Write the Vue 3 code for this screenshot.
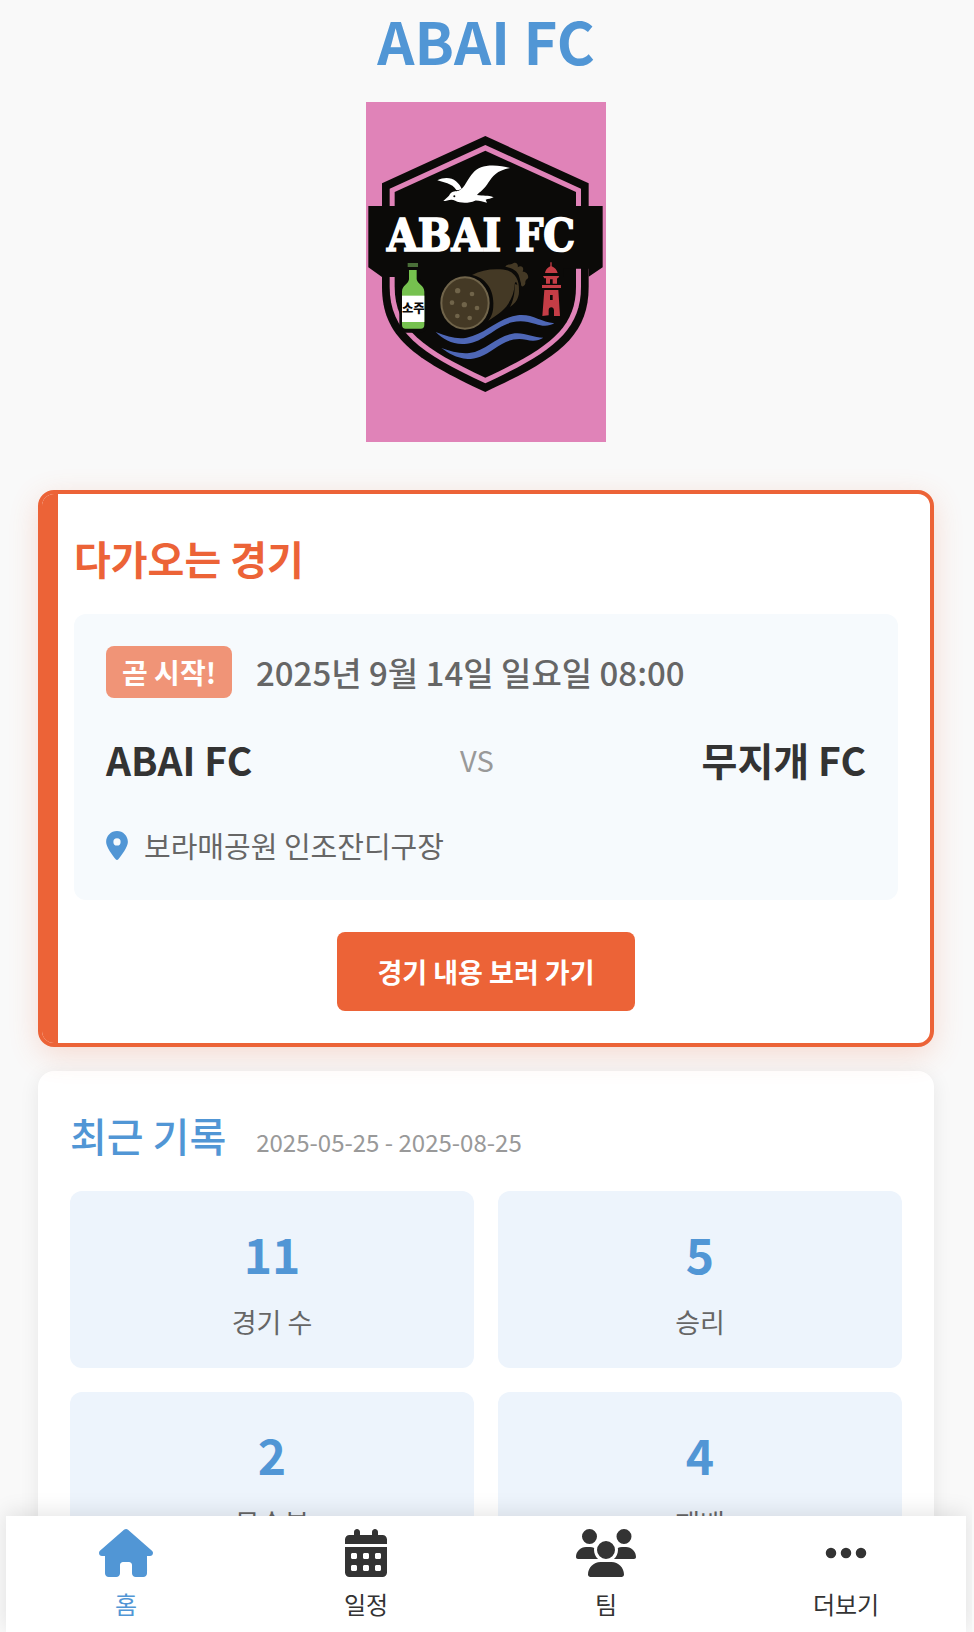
<script setup>
const stats = [
  { value: 11, label: '경기 수' },
  { value: 5, label: '승리' },
  { value: 2, label: '무승부' },
  { value: 4, label: '패배' }
]

const tabs = [
  {
    label: '홈',
    active: true,
    box: '0 0 576 512',
    width: 54,
    path: 'M575.8 255.5c0 18-15 32.1-32 32.1h-32l.7 160.2c0 2.7-.2 5.4-.5 8.1V472c0 22.1-17.9 40-40 40H456c-1.1 0-2.2 0-3.3-.1c-1.4 .1-2.8 .1-4.2 .1H416 392c-22.1 0-40-17.9-40-40V448 384c0-17.7-14.3-32-32-32H256c-17.7 0-32 14.3-32 32v64 24c0 22.1-17.9 40-40 40H160 128.1c-1.5 0-3-.1-4.5-.2c-1.2 .1-2.4 .2-3.6 .2H104c-22.1 0-40-17.9-40-40V360c0-.9 0-1.9 .1-2.8V287.6H32c-18 0-32-14-32-32.1c0-9 3-17 10-24L266.4 8c7-7 15-8 22-8s15 2 21 7L564.8 231.5c8 7 12 15 11 24z'
  },
  {
    label: '일정',
    box: '0 0 448 512',
    width: 42,
    path: 'M128 0c17.7 0 32 14.3 32 32V64H288V32c0-17.7 14.3-32 32-32s32 14.3 32 32V64h48c26.5 0 48 21.5 48 48v48H0V112C0 85.5 21.5 64 48 64H96V32c0-17.7 14.3-32 32-32zM0 192H448V464c0 26.5-21.5 48-48 48H48c-26.5 0-48-21.5-48-48V192zm64 80v32c0 8.8 7.2 16 16 16h32c8.8 0 16-7.2 16-16V272c0-8.8-7.2-16-16-16H80c-8.8 0-16 7.2-16 16zm128 0v32c0 8.8 7.2 16 16 16h32c8.8 0 16-7.2 16-16V272c0-8.8-7.2-16-16-16H208c-8.8 0-16 7.2-16 16zm144-16c-8.8 0-16 7.2-16 16v32c0 8.8 7.2 16 16 16h32c8.8 0 16-7.2 16-16V272c0-8.8-7.2-16-16-16H336zM64 400v32c0 8.8 7.2 16 16 16h32c8.8 0 16-7.2 16-16V400c0-8.8-7.2-16-16-16H80c-8.8 0-16 7.2-16 16zm144-16c-8.8 0-16 7.2-16 16v32c0 8.8 7.2 16 16 16h32c8.8 0 16-7.2 16-16V400c0-8.8-7.2-16-16-16H208zm112 16v32c0 8.8 7.2 16 16 16h32c8.8 0 16-7.2 16-16V400c0-8.8-7.2-16-16-16H336c-8.8 0-16 7.2-16 16z'
  },
  {
    label: '팀',
    box: '0 0 640 512',
    width: 60,
    path: 'M144 0a80 80 0 1 1 0 160A80 80 0 1 1 144 0zM512 0a80 80 0 1 1 0 160A80 80 0 1 1 512 0zM0 298.7C0 239.8 47.8 192 106.7 192h42.7c15.9 0 31 3.5 44.6 9.7c-1.3 7.2-1.9 14.7-1.9 22.3c0 38.2 16.8 72.5 43.3 96c-.2 0-.4 0-.7 0H21.3C9.6 320 0 310.4 0 298.7zM405.3 320c-.2 0-.4 0-.7 0c26.6-23.5 43.3-57.8 43.3-96c0-7.6-.7-15-1.9-22.3c13.6-6.3 28.7-9.7 44.6-9.7h42.7C592.2 192 640 239.8 640 298.7c0 11.8-9.6 21.3-21.3 21.3H405.3zM224 224a96 96 0 1 1 192 0 96 96 0 1 1 -192 0zM128 485.3C128 411.7 187.7 352 261.3 352H378.7C452.3 352 512 411.7 512 485.3c0 14.7-11.9 26.7-26.7 26.7H154.7c-14.7 0-26.7-11.9-26.7-26.7z'
  },
  {
    label: '더보기',
    box: '0 0 448 512',
    width: 42,
    path: 'M8 256a56 56 0 1 1 112 0A56 56 0 1 1 8 256zm160 0a56 56 0 1 1 112 0 56 56 0 1 1 -112 0zm216-56a56 56 0 1 1 0 112 56 56 0 1 1 0-112z'
  }
]
</script>

<template>
  <div class="shell">
    <main class="page">
      <header class="hero">
        <h1>ABAI FC</h1>
        <svg class="crest" viewBox="48 306 720 1020" role="img" aria-label="ABAI FC">
          <rect x="48" y="306" width="720" height="1020" fill="#e083b8" />
          <!-- shield -->
          <path fill="#0b0a08" d="M406 408L716 550V860C716 1010 622 1075 406 1176C190 1075 96 1010 96 860V550Z" />
          <path fill="#e083b8" d="M406 435L693 566V860C693 995 602 1058 406 1150C210 1058 119 995 119 860V566Z" />
          <path fill="#0b0a08" d="M406 452L678 576V860C678 988 590 1047 406 1133C222 1047 134 988 134 860V576Z" />
          <path fill="#0b0a08" d="M55 618H758V802L716 830V806H640V831H96L55 802Z" />
          <!-- seagull -->
          <path fill="#fff" d="M262 541C282 531 304 532 318 544C327 552 332 559 335 567C329 570 324 571 319 570C313 560 303 554 292 550C282 546 272 544 262 541Z" />
          <path fill="#fff" d="M280 603C289 594 297 589 300 582C307 572 317 575 326 572C341 567 348 547 359 532C372 512 386 501 409 498C433 495 459 498 480 504C461 508 447 513 436 523C419 537 412 558 397 570C391 576 385 580 381 585C398 588 414 585 431 592C423 596 415 597 407 599L411 608C398 606 387 601 375 602C361 608 345 610 329 607C319 605 312 599 304 599C296 600 288 603 280 603Z" />
          <circle cx="313" cy="589" r="3" fill="#0b0a08" />
          <text class="crest-name" x="393" y="752" text-anchor="middle">ABAI FC</text>
          <!-- bottle -->
          <path fill="#0b0a08" d="M168 780H210V838C220 850 230 858 230 874V985Q228 998 210 998H165Q148 996 148 985V874C148 858 160 850 168 838Z" />
          <rect x="173" y="789" width="31" height="12" fill="#4a6f38" />
          <path fill="#76c14f" d="M177 810H200V838C203 853 223 856 223 875V975Q223 986 212 986H167Q156 986 156 975V875C156 856 175 853 177 838Z" />
          <rect x="156" y="887" width="67" height="79" fill="#fff" />
          <text class="crest-label" x="190" y="939" text-anchor="middle">소주</text>
          <!-- sundae roll -->
          <path fill="#443925" d="M366 825C390 812 421 806 451 808C470 809 485 814 494 826C503 837 508 852 506 866L501 880C506 856 498 835 494 853C493 884 478 913 456 933C445 943 428 954 415 962C424 950 430 937 430 914C432 868 406 832 366 825Z" />
          <path fill="#443925" d="M504 855C512 880 505 905 480 921C489 904 495 882 494 852Z" />
          <path fill="#443925" d="M466 800C471 791 483 795 491 789C499 785 506 794 503 802C513 794 524 802 518 815C529 814 537 825 534 835C529 839 525 841 526 851C520 863 512 861 513 850C509 838 509 825 498 814C489 806 477 802 466 800Z" />
          <ellipse cx="345" cy="909" rx="71" ry="77" fill="#443925" stroke="#70644a" stroke-width="6" />
          <g fill="#70644a">
            <circle cx="323" cy="872" r="8" />
            <circle cx="366" cy="882" r="7" />
            <circle cx="306" cy="908" r="7" />
            <circle cx="343" cy="914" r="8" />
            <circle cx="381" cy="924" r="7" />
            <circle cx="322" cy="948" r="7" />
            <circle cx="359" cy="954" r="7" />
          </g>
          <!-- lighthouse -->
          <g fill="#c53d46">
            <path d="M601 787H605V799C615 803 621 811 623 819H585C586 811 592 803 601 799Z" />
            <path d="M579 828H628L624 835H621V851H608V838H600V851H588V835H583Z" />
            <rect x="576" y="855" width="57" height="9" />
            <path fill-rule="evenodd" d="M583 870H625L630 948H612V931Q611 922 604 922Q596 922 596 931V946L577 948ZM600 885V900H608V885Z" />
          </g>
          <!-- waves -->
          <path fill="#4e67b6" d="M257 996C292 1011 323 1018 350 1013C407 1003 443 954 503 946C548 941 570 966 613 970C597 980 576 979 557 972C532 964 511 960 486 967C435 980 402 1025 351 1031C311 1036 281 1020 257 996Z" />
          <path fill="#4e67b6" d="M274 1044C303 1054 330 1062 358 1059C407 1053 439 1009 487 1001C522 995 548 1013 580 1013C565 1023 547 1024 528 1019C491 1011 462 1026 433 1046C402 1068 378 1077 353 1077C318 1074 295 1059 274 1044Z" />
        </svg>
      </header>

      <section class="card next-match">
        <h2>다가오는 경기</h2>
        <div class="match">
          <div class="when">
            <span class="badge">곧 시작!</span>
            <time datetime="2025-09-14T08:00">2025년 9월 14일 일요일 08:00</time>
          </div>
          <div class="teams">
            <strong>ABAI FC</strong>
            <span class="versus">VS</span>
            <strong>무지개 FC</strong>
          </div>
          <div class="place">
            <svg viewBox="0 0 384 512" aria-hidden="true">
              <path d="M215.7 499.2C267 435 384 279.4 384 192C384 86 298 0 192 0S0 86 0 192c0 87.4 117 243 168.3 307.2c12.3 15.3 35.1 15.3 47.4 0zM192 128a64 64 0 1 1 0 128 64 64 0 1 1 0-128z" />
            </svg>
            <span>보라매공원 인조잔디구장</span>
          </div>
        </div>
        <button type="button" class="details">경기 내용 보러 가기</button>
      </section>

      <section class="card">
        <div class="record-head">
          <h2>최근 기록</h2>
          <span class="range">2025-05-25 - 2025-08-25</span>
        </div>
        <div class="stats">
          <div v-for="stat in stats" :key="stat.label" class="stat">
            <div class="value">{{ stat.value }}</div>
            <div class="label">{{ stat.label }}</div>
          </div>
        </div>
      </section>
    </main>

    <nav class="tabs">
      <a v-for="tab in tabs" :key="tab.label" href="#" :class="{ active: tab.active }">
        <svg :viewBox="tab.box" :width="tab.width" height="48" aria-hidden="true">
          <path :d="tab.path" />
        </svg>
        <span>{{ tab.label }}</span>
      </a>
    </nav>
  </div>
</template>

<style>
body {
  margin: 0;
  padding-right: 2px;
  background: #f9f9f9;
}
</style>

<style scoped>
* {
  box-sizing: border-box;
}

.shell {
  height: 100vh;
  overflow: hidden;
  position: relative;
  color: #333;
  font-family: "Noto Sans CJK KR", sans-serif;
}

.page {
  height: 100%;
  overflow-y: auto;
  scrollbar-width: none;
  padding: 0 max(32px, calc(50% - 448px)) 140px;
}

.hero {
  display: flex;
  flex-direction: column;
  align-items: center;
  margin-bottom: 48px;
}

h1 {
  margin: 0 0 22px;
  color: #5196d5;
  font-size: 58px;
  font-weight: 700;
  line-height: 80px;
}

.crest {
  display: block;
  width: 240px;
  height: 340px;
}

.crest-name {
  fill: #fff;
  stroke: #fff;
  stroke-width: 5px;
  font: bold 133px "DejaVu Serif Condensed", "DejaVu Serif", serif;
}

.crest-label {
  fill: #0b0a08;
  font: 900 37px "Noto Sans CJK KR", sans-serif;
}

.card {
  margin-bottom: 24px;
  padding: 32px;
  border-radius: 16px;
  background: #fff;
  box-shadow: 0 4px 20px rgba(0, 0, 0, 0.08);
}

h2 {
  margin: 0;
  color: #5196d5;
  font-size: 40px;
  font-weight: 500;
  line-height: 64px;
}

.next-match {
  position: relative;
  overflow: hidden;
  border: 4px solid #ec6337;
  box-shadow: 0 8px 30px rgba(236, 99, 55, 0.2);
}

.next-match::before {
  content: "";
  position: absolute;
  inset: 0 auto 0 0;
  width: 16px;
  background: #ec6337;
}

.next-match h2 {
  margin-bottom: 24px;
  color: #ec6337;
  font-weight: 700;
}

.match {
  padding: 32px;
  border-radius: 12px;
  background: #f6fafd;
}

.when {
  display: flex;
  align-items: center;
  gap: 24px;
  margin-bottom: 30px;
  color: #666;
  font-size: 33px;
  font-weight: 500;
  line-height: 52px;
}

.badge {
  padding: 4px 16px;
  border-radius: 8px;
  background: #f09477;
  color: #fff;
  font-size: 28px;
  font-weight: 700;
  line-height: 44px;
}

.teams {
  display: flex;
  align-items: center;
  justify-content: space-between;
  margin-bottom: 32px;
  font-size: 39px;
  line-height: 62px;
}

.versus {
  color: #999;
  font-size: 29px;
}

.place {
  display: flex;
  align-items: center;
  gap: 16px;
  color: #666;
  font-size: 29px;
  line-height: 46px;
}

.place svg {
  width: 22px;
  height: 29px;
  fill: #5196d5;
}

.details {
  display: block;
  margin: 32px auto 0;
  padding: 18px 40px;
  border: 0;
  border-radius: 8px;
  background: #ec6337;
  color: #fff;
  font: 700 27px/43px "Noto Sans CJK KR", sans-serif;
}

.record-head {
  display: flex;
  align-items: baseline;
  gap: 30px;
  margin-bottom: 24px;
}

.range {
  color: #999;
  font-size: 24px;
}

.stats {
  display: grid;
  grid-template-columns: 1fr 1fr;
  gap: 24px;
}

.stat {
  padding: 24px;
  border-radius: 12px;
  background: #edf4fc;
  text-align: center;
}

.value {
  margin-bottom: 8px;
  color: #5196d5;
  font-size: 48px;
  font-weight: 700;
  line-height: 77px;
}

.label {
  color: #666;
  font-size: 27px;
  line-height: 44px;
}

.tabs {
  position: absolute;
  right: 0;
  bottom: 0;
  left: 0;
  display: grid;
  grid-template-columns: repeat(4, 1fr);
  max-width: 960px;
  margin: 0 auto;
  padding: 13px 0 9px;
  background: #fff;
  box-shadow: 0 -4px 20px rgba(0, 0, 0, 0.1);
}

.tabs a {
  display: flex;
  flex-direction: column;
  align-items: center;
  gap: 8px;
  color: #333;
  font-size: 24px;
  line-height: 38px;
  text-decoration: none;
}

.tabs a.active {
  color: #5196d5;
}

.tabs svg {
  fill: currentColor;
}
</style>
